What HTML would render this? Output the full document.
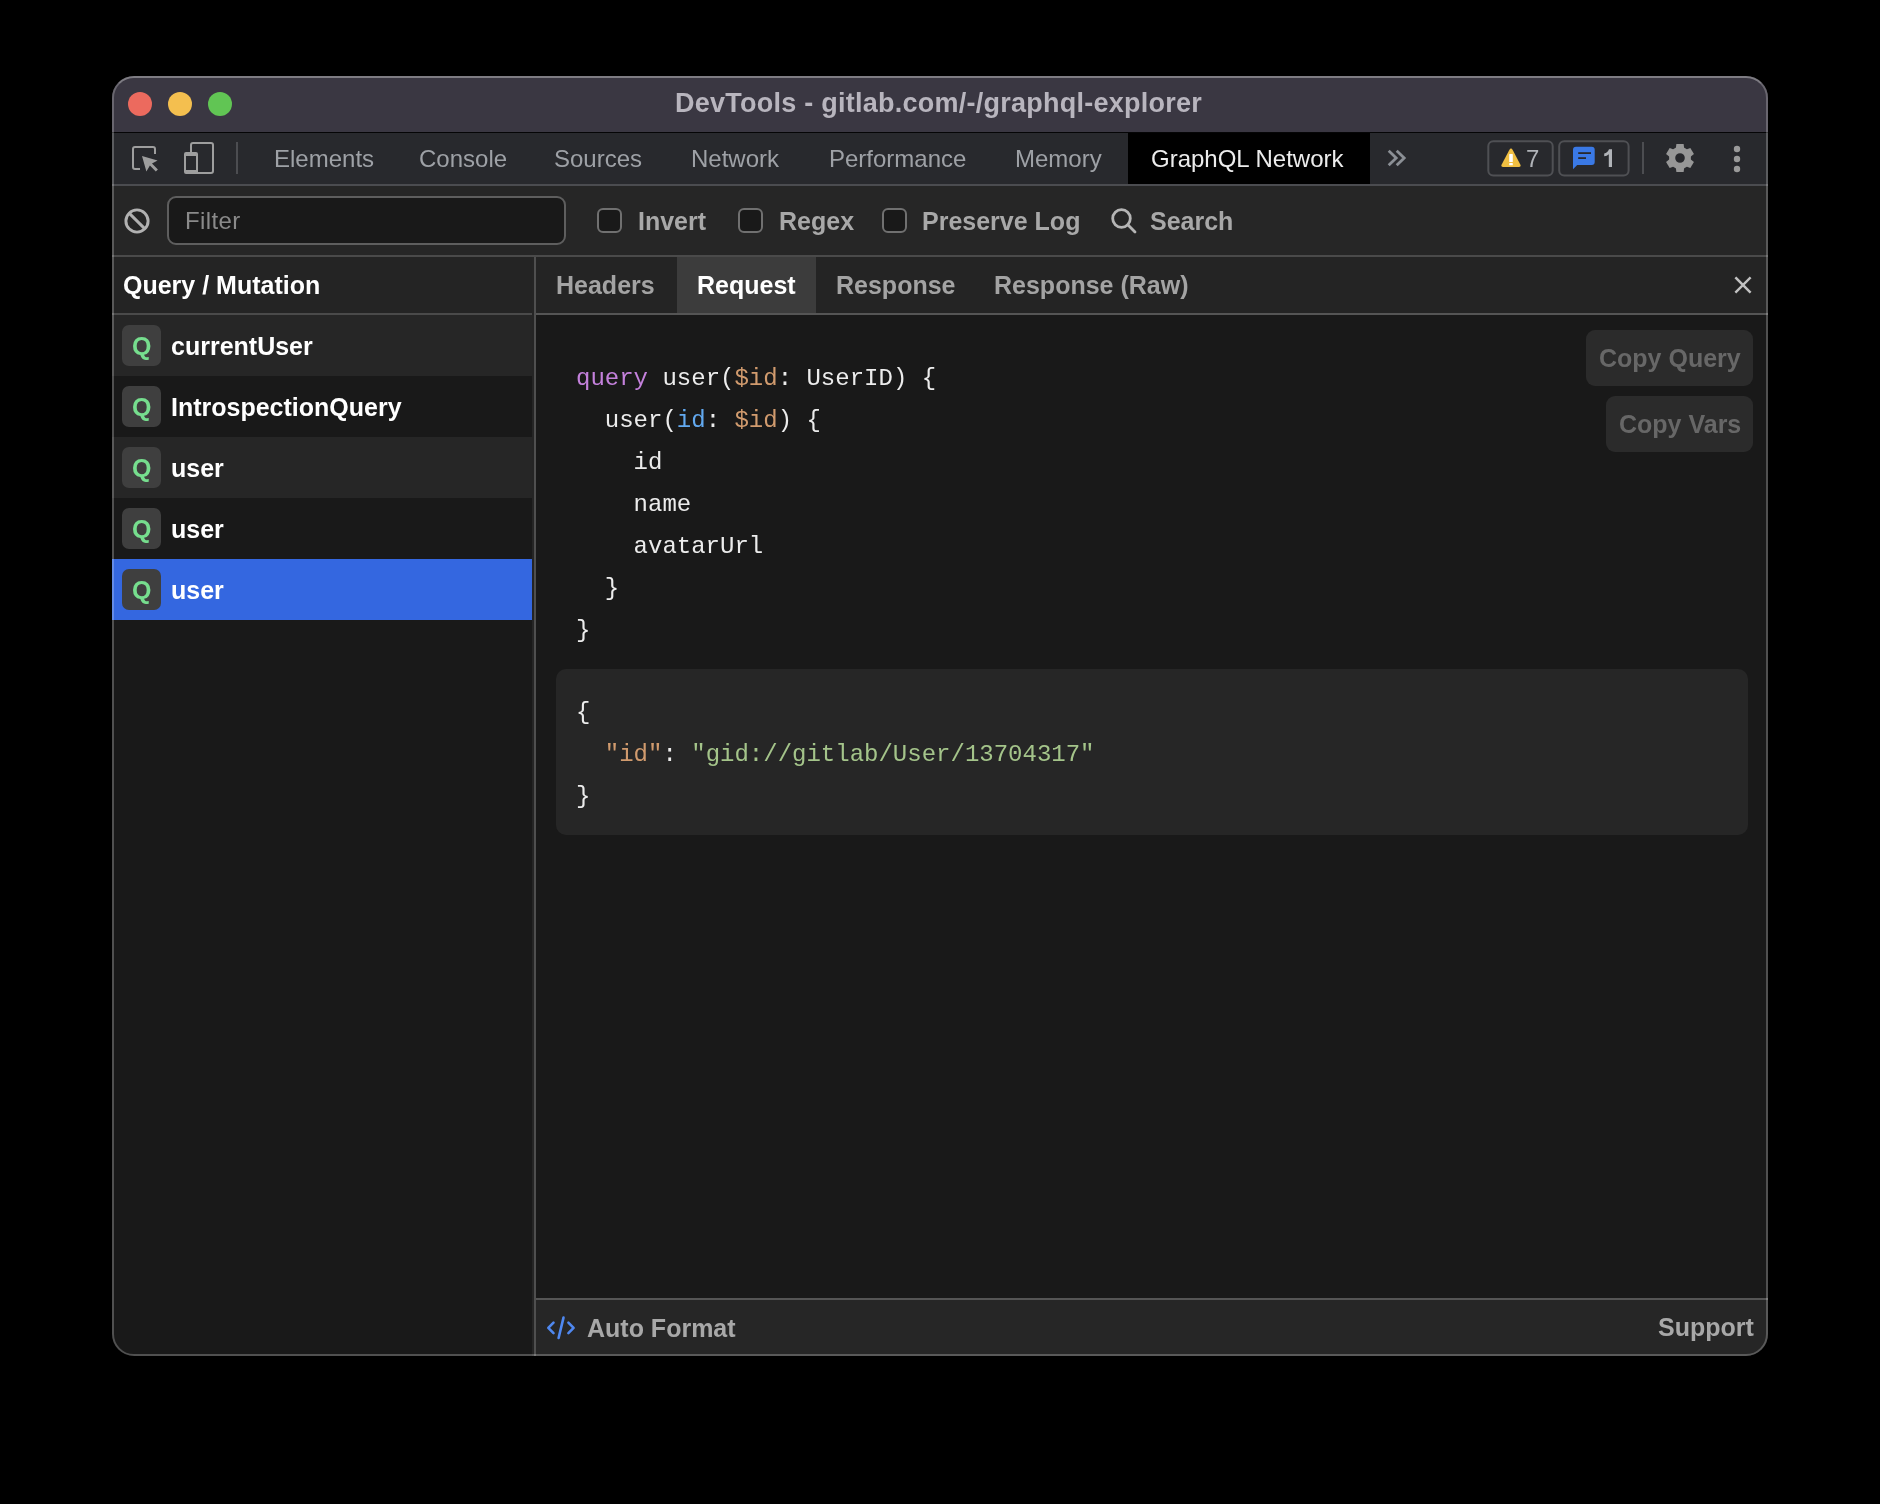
<!DOCTYPE html>
<html><head><meta charset="utf-8">
<style>
html,body{margin:0;padding:0;background:#000;width:1880px;height:1504px;overflow:hidden;}
*{box-sizing:border-box;}
body{font-family:"Liberation Sans",sans-serif;position:relative;}
.a{position:absolute;}
.t{position:absolute;white-space:nowrap;line-height:30px;height:30px;}
#win{will-change:transform;left:112px;top:76px;width:1656px;height:1280px;border-radius:22px;background:#191919;overflow:hidden;}
#inner{left:2px;top:2px;width:1652px;height:1276px;}
#border{left:112px;top:76px;width:1656px;height:1280px;border-radius:22px;border:2px solid rgba(255,255,255,0.24);}
#border2{left:112px;top:76px;width:1656px;height:56px;overflow:hidden;}
#border2 div{left:0;top:0;width:1656px;height:1280px;border-radius:22px;border:2px solid transparent;border-top-color:rgba(255,255,255,0.14);}
/* coordinates inside #inner are relative to (114,78) */
#title{left:-2px;top:-2px;width:1656px;height:56px;background:#3a3742;}
#tline{left:-2px;top:54px;width:1656px;height:1px;background:#050506;}
#tool{left:-2px;top:55px;width:1656px;height:51px;background:#28292d;}
#toolline{left:-2px;top:106px;width:1656px;height:2px;background:#4b4c50;}
#filter{left:-2px;top:108px;width:1656px;height:69px;background:#262626;}
#filterline{left:-2px;top:177px;width:1656px;height:2px;background:#4a4a4a;}
.tab{font-size:24px;color:#9ea1a6;}
.btxt{font-weight:bold;font-size:25px;}
.mono{font-family:"Liberation Mono",monospace;font-size:24px;line-height:42px;white-space:pre;position:absolute;color:#ececec;}
</style></head><body>
<div id="win" class="a">
  <div id="inner" class="a">
    <div id="title" class="a"></div>
    <div id="tline" class="a"></div>
    <div id="tool" class="a"></div>
    <div id="toolline" class="a"></div>
    <div id="filter" class="a"></div>
    <div id="filterline" class="a"></div>

    <!-- left panel -->
    <div class="a" style="left:-2px;top:179px;width:420px;height:56px;background:#242424;"></div>
    <div class="a" style="left:-2px;top:235px;width:420px;height:2px;background:#4a4a4a;"></div>
    <div class="a" style="left:-2px;top:237px;width:420px;height:61px;background:#262626;"></div>
    <div class="a" style="left:-2px;top:298px;width:420px;height:61px;background:#191919;"></div>
    <div class="a" style="left:-2px;top:359px;width:420px;height:61px;background:#262626;"></div>
    <div class="a" style="left:-2px;top:420px;width:420px;height:61px;background:#191919;"></div>
    <div class="a" style="left:-2px;top:481px;width:420px;height:61px;background:#3467e0;"></div>

    <div class="a" style="left:418px;top:179px;width:2px;height:1099px;background:#252525;"></div>
    <!-- vertical divider -->
    <div class="a" style="left:420px;top:179px;width:2px;height:1099px;background:#4f4f4f;"></div>

    <!-- right panel -->
    <div class="a" style="left:422px;top:179px;width:1232px;height:56px;background:#242424;"></div>
    <div class="a" style="left:563px;top:179px;width:139px;height:56px;background:#3c3c3c;"></div>
    <div class="a" style="left:422px;top:235px;width:1232px;height:2px;background:#555;"></div>
    <div class="a" style="left:422px;top:1220px;width:1232px;height:2px;background:#555;"></div>
    <div class="a" style="left:422px;top:1222px;width:1232px;height:58px;background:#262626;"></div>

    <!-- traffic lights -->
    <div class="a" style="left:14px;top:14px;width:24px;height:24px;border-radius:50%;background:#ec6a5e;"></div>
    <div class="a" style="left:54px;top:14px;width:24px;height:24px;border-radius:50%;background:#f4bf4f;"></div>
    <div class="a" style="left:94px;top:14px;width:24px;height:24px;border-radius:50%;background:#61c554;"></div>
    <div class="t" style="left:561px;top:10px;font-weight:bold;font-size:27px;letter-spacing:0.25px;color:#b8b5be;">DevTools - gitlab.com/-/graphql-explorer</div>

    <!-- tabs -->
    <div class="a" style="left:1014px;top:55px;width:242px;height:51px;background:#000;"></div>
    <div class="t tab" style="left:160px;top:66px;">Elements</div>
    <div class="t tab" style="left:305px;top:66px;">Console</div>
    <div class="t tab" style="left:440px;top:66px;">Sources</div>
    <div class="t tab" style="left:577px;top:66px;">Network</div>
    <div class="t tab" style="left:715px;top:66px;">Performance</div>
    <div class="t tab" style="left:901px;top:66px;">Memory</div>
    <div class="t tab" style="left:1037px;top:66px;color:#ececec;">GraphQL Network</div>

    <!-- filter bar -->
    <div class="a" style="left:53px;top:118px;width:399px;height:49px;border:2px solid #5e5e5e;border-radius:9px;background:#191919;"></div>
    <div class="t" style="left:71px;top:128px;font-size:24px;letter-spacing:0.4px;color:#8a8a8a;">Filter</div>
    <div class="a" style="left:483px;top:130px;width:25px;height:25px;border:2px solid #707070;border-radius:6px;background:#191919;"></div>
    <div class="t btxt" style="left:524px;top:128px;color:#a8a8a8;">Invert</div>
    <div class="a" style="left:624px;top:130px;width:25px;height:25px;border:2px solid #707070;border-radius:6px;background:#191919;"></div>
    <div class="t btxt" style="left:665px;top:128px;color:#a8a8a8;">Regex</div>
    <div class="a" style="left:768px;top:130px;width:25px;height:25px;border:2px solid #707070;border-radius:6px;background:#191919;"></div>
    <div class="t btxt" style="left:808px;top:128px;color:#a8a8a8;">Preserve Log</div>
    <div class="t btxt" style="left:1036px;top:128px;color:#a8a8a8;">Search</div>

    <!-- left panel text -->
    <div class="t btxt" style="left:9px;top:192px;color:#ffffff;">Query / Mutation</div>
    <div class="a" style="left:8px;top:247px;width:39px;height:41px;border-radius:7px;background:#3f3f3f;"></div>
    <div class="t btxt" style="left:18px;top:253px;color:#76de8e;">Q</div>
    <div class="t btxt" style="left:57px;top:253px;color:#ffffff;">currentUser</div>
    <div class="a" style="left:8px;top:308px;width:39px;height:41px;border-radius:7px;background:#3f3f3f;"></div>
    <div class="t btxt" style="left:18px;top:314px;color:#76de8e;">Q</div>
    <div class="t btxt" style="left:57px;top:314px;color:#ffffff;">IntrospectionQuery</div>
    <div class="a" style="left:8px;top:369px;width:39px;height:41px;border-radius:7px;background:#3f3f3f;"></div>
    <div class="t btxt" style="left:18px;top:375px;color:#76de8e;">Q</div>
    <div class="t btxt" style="left:57px;top:375px;color:#ffffff;">user</div>
    <div class="a" style="left:8px;top:430px;width:39px;height:41px;border-radius:7px;background:#3f3f3f;"></div>
    <div class="t btxt" style="left:18px;top:436px;color:#76de8e;">Q</div>
    <div class="t btxt" style="left:57px;top:436px;color:#ffffff;">user</div>
    <div class="a" style="left:8px;top:491px;width:39px;height:41px;border-radius:7px;background:#3f3f3f;"></div>
    <div class="t btxt" style="left:18px;top:497px;color:#76de8e;">Q</div>
    <div class="t btxt" style="left:57px;top:497px;color:#ffffff;">user</div>

    <!-- right tabs -->
    <div class="t btxt" style="left:442px;top:192px;color:#a3a3a3;">Headers</div>
    <div class="t btxt" style="left:583px;top:192px;color:#ffffff;">Request</div>
    <div class="t btxt" style="left:722px;top:192px;color:#a3a3a3;">Response</div>
    <div class="t btxt" style="left:880px;top:192px;color:#a3a3a3;">Response (Raw)</div>

    <!-- buttons -->
    <div class="a" style="left:1472px;top:252px;width:167px;height:56px;border-radius:9px;background:#2b2b2b;"></div>
    <div class="t btxt" style="left:1485px;top:265px;color:#676767;">Copy Query</div>
    <div class="a" style="left:1492px;top:318px;width:147px;height:56px;border-radius:9px;background:#2b2b2b;"></div>
    <div class="t btxt" style="left:1505px;top:331px;color:#676767;">Copy Vars</div>

    <!-- code -->
    <div class="mono" style="left:462px;top:280px;"><span style="color:#c481dc">query</span> user(<span style="color:#d19b6e">$id</span>: UserID) {
  user(<span style="color:#62a9f0">id</span>: <span style="color:#d19b6e">$id</span>) {
    id
    name
    avatarUrl
  }
}</div>
    <div class="a" style="left:442px;top:591px;width:1192px;height:166px;border-radius:10px;background:#262626;"></div>
    <div class="mono" style="left:462px;top:614px;">{
  <span style="color:#d19b6e">"id"</span>: <span style="color:#a4c48a">"gid://gitlab/User/13704317"</span>
}</div>

    <!-- footer -->
    <div class="t btxt" style="left:473px;top:1235px;color:#a8a8a8;">Auto Format</div>
    <div class="t btxt" style="left:1544px;top:1234px;color:#a8a8a8;">Support</div>
    <div class="t tab" style="left:1412px;top:66px;color:#b0b3b8;">7</div>
  </div>
</div>

<div id="border" class="a"></div>
<div id="border2" class="a"><div class="a"></div></div>
<svg class="a" style="left:0;top:0;" width="1880" height="1504" viewBox="0 0 1880 1504">
  <!-- inspect -->
  <path d="M140,169 H135 Q133,169 133,167 V149 Q133,147 135,147 H153 Q155,147 155,149 V154" fill="none" stroke="#9e9e9e" stroke-width="2"/>
  <path d="M142,156 L157.6,160.4 L152,163.4 L157.9,169.5 L155.8,171.6 L149.9,165.6 L146.4,171.5 Z" fill="#9e9e9e"/>
  <!-- device -->
  <path d="M191,152 V145 Q191,143 193,143 H211 Q213,143 213,145 V171 Q213,173 211,173 H197" fill="none" stroke="#9e9e9e" stroke-width="2"/>
  <path fill-rule="evenodd" fill="#9e9e9e" d="M186,152 H196 Q198,152 198,154 V174 H186 Q184,174 184,172 V154 Q184,152 186,152 Z M186,156 V170 H196 V156 Z"/>
  <rect x="236" y="142" width="2" height="32" fill="#4c4d51"/>
  <!-- chevrons -->
  <path d="M1389.7,151.7 L1396.2,158 L1389.7,164.3 M1397.7,151.7 L1404.2,158 L1397.7,164.3" fill="none" stroke="#8b8f95" stroke-width="2.8" stroke-linecap="square" stroke-linejoin="miter"/>
  <!-- warning badge -->
  <rect x="1488.3" y="141.3" width="64.4" height="34.2" rx="5" fill="none" stroke="#4f5054" stroke-width="2"/>
  <path d="M1509.3,149.9 Q1511,147.2 1512.7,149.9 L1520.3,164.6 Q1521.5,167 1518.8,167 H1503.2 Q1500.5,167 1501.7,164.6 Z" fill="#f0bf42"/>
  <rect x="1509.2" y="154" width="3.6" height="8" rx="0.6" fill="#fff"/>
  <rect x="1509.2" y="163.1" width="3.6" height="2.2" rx="0.4" fill="#fff"/>
  <!-- info badge -->
  <rect x="1559.2" y="141.3" width="69.4" height="34.2" rx="5" fill="none" stroke="#4f5054" stroke-width="2"/>
  <path d="M1576,146.7 H1591.7 Q1594.7,146.7 1594.7,149.7 V162 Q1594.7,165 1591.7,165 H1577.2 L1573,169.2 V149.7 Q1573,146.7 1576,146.7 Z" fill="#3a79e6"/>
  <rect x="1578.2" y="152.2" width="12.8" height="1.8" fill="#28292d"/>
  <rect x="1578.2" y="157.2" width="7.8" height="1.8" fill="#28292d"/>
  <path d="M1609,149.2 H1612 V167 H1608.8 V154.3 C1607.5,155.6 1606,156.2 1604.2,156.3 V153.5 C1606.5,153 1608.2,151.5 1609,149.2 Z" fill="#b0b3b8"/>
  <rect x="1642" y="142" width="2" height="32" fill="#4c4d51"/>
  <!-- gear -->
  <g transform="translate(1680,158)" fill="#979797">
    <path fill-rule="evenodd" d="M0,-10.9 A10.9,10.9 0 1 1 0,10.9 A10.9,10.9 0 1 1 0,-10.9 Z M0,-4.8 A4.8,4.8 0 1 0 0,4.8 A4.8,4.8 0 1 0 0,-4.8 Z"/>
    <path d="M-3.6,-14 H3.6 L4.3,-9 H-4.3 Z"/>
    <path d="M-3.6,-14 H3.6 L4.3,-9 H-4.3 Z" transform="rotate(60)"/>
    <path d="M-3.6,-14 H3.6 L4.3,-9 H-4.3 Z" transform="rotate(120)"/>
    <path d="M-3.6,-14 H3.6 L4.3,-9 H-4.3 Z" transform="rotate(180)"/>
    <path d="M-3.6,-14 H3.6 L4.3,-9 H-4.3 Z" transform="rotate(240)"/>
    <path d="M-3.6,-14 H3.6 L4.3,-9 H-4.3 Z" transform="rotate(300)"/>
  </g>
  <!-- kebab -->
  <circle cx="1737" cy="149" r="3.2" fill="#9a9a9a"/>
  <circle cx="1737" cy="159" r="3.2" fill="#9a9a9a"/>
  <circle cx="1737" cy="169" r="3.2" fill="#9a9a9a"/>
  <!-- block icon -->
  <circle cx="137" cy="221" r="11.1" fill="none" stroke="#b1b1b1" stroke-width="2.9"/>
  <path d="M129.6,213.6 L144.4,228.4" stroke="#b1b1b1" stroke-width="2.9"/>
  <!-- search -->
  <circle cx="1121.5" cy="218.5" r="8.8" fill="none" stroke="#b5b5b5" stroke-width="2.8"/>
  <path d="M1127.8,224.8 L1135,232" stroke="#b5b5b5" stroke-width="2.8" stroke-linecap="round"/>
  <!-- close X -->
  <path d="M1736.2,278.2 L1749.8,291.8 M1749.8,278.2 L1736.2,291.8" stroke="#c2c2c2" stroke-width="2.4" stroke-linecap="square"/>
  <!-- code icon -->
  <path d="M553.5,1322.7 L548.3,1327.9 L553.5,1333.1 M568.4,1322.7 L573.6,1327.9 L568.4,1333.1 M563.5,1317.6 L558.6,1338" fill="none" stroke="#4f88f0" stroke-width="2.6" stroke-linecap="round" stroke-linejoin="round"/>
</svg>
</body></html>
